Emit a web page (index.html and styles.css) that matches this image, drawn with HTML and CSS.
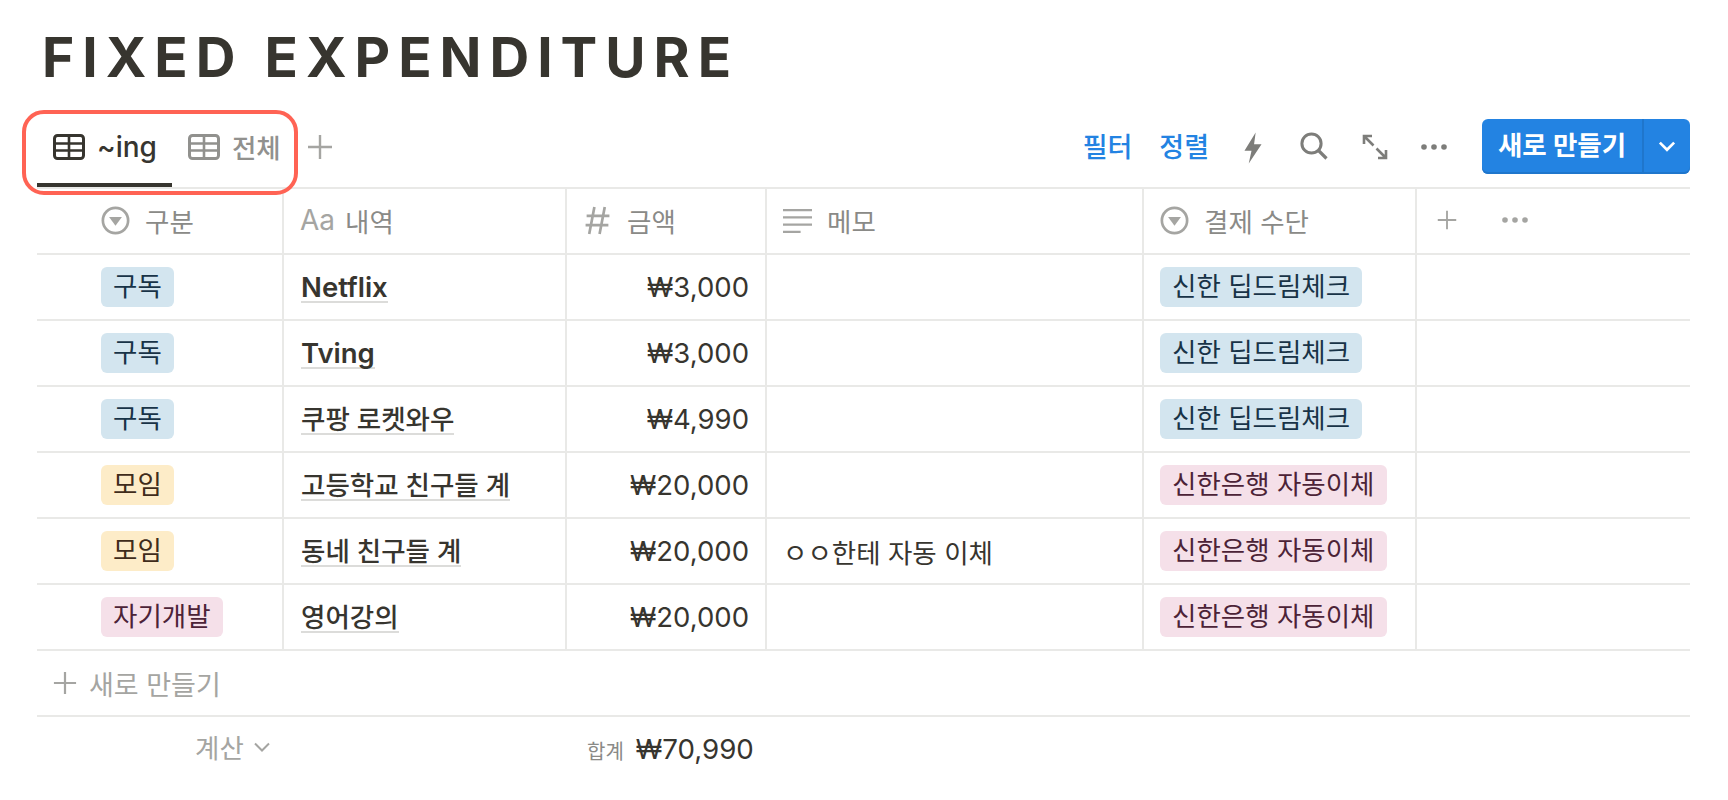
FILE: index.html
```html
<!DOCTYPE html>
<html lang="ko">
<head>
    <meta charset="UTF-8">
    <title>Fixed Expenditure</title>
    <link rel="stylesheet" href="styles.css">
</head>
<body>
    <svg class="icon-defs" width="0" height="0">
        <symbol id="i-table" viewBox="0 0 32 26">
            <rect x="1.5" y="1.5" width="29" height="23" rx="3" fill="none" stroke="currentColor" stroke-width="3"/>
            <path d="M1.5 9.5h29M1.5 16.5h29M16 1.5v23" fill="none" stroke="currentColor" stroke-width="2.6"/>
        </symbol>
        <symbol id="i-select" viewBox="0 0 28 28">
            <circle cx="14" cy="14" r="12.2" fill="none" stroke="currentColor" stroke-width="2.6"/>
            <path d="M7.8 10.5h12.4L14 19z" fill="currentColor"/>
        </symbol>
        <symbol id="i-plus" viewBox="0 0 26 26">
            <path d="M13 1v24M1 13h24" fill="none" stroke="currentColor" stroke-width="2.4"/>
        </symbol>
        <symbol id="i-dots" viewBox="0 0 26 6">
            <circle cx="3" cy="3" r="2.8" fill="currentColor"/>
            <circle cx="13" cy="3" r="2.8" fill="currentColor"/>
            <circle cx="23" cy="3" r="2.8" fill="currentColor"/>
        </symbol>
    </svg>

    <div class="page">
        <h1 class="title">FIXED EXPENDITURE</h1>

        <div class="toolbar">
            <div class="tabs">
                <div class="tab tab-active">
                    <svg class="tab-icon"><use href="#i-table"/></svg>
                    <span class="tab-latin">~ing</span>
                </div>
                <div class="tab">
                    <svg class="tab-icon"><use href="#i-table"/></svg>
                    <span>전체</span>
                </div>
                <svg class="tab-add"><use href="#i-plus"/></svg>
                <div class="highlight"></div>
            </div>

            <div class="actions">
                <span class="action-link">필터</span>
                <span class="action-link">정렬</span>
                <svg class="action-icon bolt" viewBox="0 0 18 30"><path d="M11.5 0.5L1 17.5h6.6L5 29.5 17 11.5h-7z" fill="currentColor"/></svg>
                <svg class="action-icon search" viewBox="0 0 28 28"><circle cx="11.5" cy="11.5" r="9.6" fill="none" stroke="currentColor" stroke-width="3"/><path d="M18.5 18.5L26.5 26.5" fill="none" stroke="currentColor" stroke-width="3.2"/></svg>
                <svg class="action-icon expand" viewBox="0 0 26 26"><path d="M2 2l9.5 9.5M14.5 14.5L24 24M2 10V2h8M24 16v8h-8" fill="none" stroke="currentColor" stroke-width="2.6"/></svg>
                <svg class="action-icon dots"><use href="#i-dots"/></svg>
                <div class="new-button">
                    <span class="new-label">새로 만들기</span>
                    <span class="new-arrow">
                        <svg viewBox="0 0 16 10" width="18" height="11"><path d="M1.5 1.5L8 8l6.5-6.5" fill="none" stroke="currentColor" stroke-width="2.4"/></svg>
                    </span>
                </div>
            </div>
        </div>

        <table class="sheet">
            <colgroup>
                <col class="col-type">
                <col class="col-name">
                <col class="col-amount">
                <col class="col-memo">
                <col class="col-pay">
                <col class="col-extra">
            </colgroup>
            <thead>
                <tr>
                    <th class="first-cell"><div class="head"><svg class="head-icon"><use href="#i-select"/></svg>구분</div></th>
                    <th><div class="head"><span class="aa">Aa</span>내역</div></th>
                    <th>
                        <div class="head">
                            <svg class="head-icon hash" viewBox="0 0 24 28"><path d="M9 1L4 27M19 1l-5 26M1.5 9.5h22M0.5 18.5h22" fill="none" stroke="currentColor" stroke-width="2.6"/></svg>
                            금액
                        </div>
                    </th>
                    <th>
                        <div class="head">
                            <svg class="head-icon lines" viewBox="0 0 28 24"><path d="M0 2h28M0 9h28M0 16h28M0 23h17" fill="none" stroke="currentColor" stroke-width="2.2"/></svg>
                            메모
                        </div>
                    </th>
                    <th><div class="head"><svg class="head-icon"><use href="#i-select"/></svg>결제 수단</div></th>
                    <th class="last-cell">
                        <div class="head">
                            <svg class="head-plus"><use href="#i-plus"/></svg>
                            <svg class="head-dots"><use href="#i-dots"/></svg>
                        </div>
                    </th>
                </tr>
            </thead>
            <tbody>
                <tr>
                    <td class="first-cell"><span class="pill blue">구독</span></td>
                    <td><span class="name bold">Netflix</span></td>
                    <td class="amount">₩3,000</td>
                    <td></td>
                    <td><span class="pill blue">신한 딥드림체크</span></td>
                    <td class="last-cell"></td>
                </tr>
                <tr>
                    <td class="first-cell"><span class="pill blue">구독</span></td>
                    <td><span class="name bold">Tving</span></td>
                    <td class="amount">₩3,000</td>
                    <td></td>
                    <td><span class="pill blue">신한 딥드림체크</span></td>
                    <td class="last-cell"></td>
                </tr>
                <tr>
                    <td class="first-cell"><span class="pill blue">구독</span></td>
                    <td><span class="name">쿠팡 로켓와우</span></td>
                    <td class="amount">₩4,990</td>
                    <td></td>
                    <td><span class="pill blue">신한 딥드림체크</span></td>
                    <td class="last-cell"></td>
                </tr>
                <tr>
                    <td class="first-cell"><span class="pill yellow">모임</span></td>
                    <td><span class="name">고등학교 친구들 계</span></td>
                    <td class="amount">₩20,000</td>
                    <td></td>
                    <td><span class="pill pink">신한은행 자동이체</span></td>
                    <td class="last-cell"></td>
                </tr>
                <tr>
                    <td class="first-cell"><span class="pill yellow">모임</span></td>
                    <td><span class="name">동네 친구들 계</span></td>
                    <td class="amount">₩20,000</td>
                    <td class="memo">ㅇㅇ한테 자동 이체</td>
                    <td><span class="pill pink">신한은행 자동이체</span></td>
                    <td class="last-cell"></td>
                </tr>
                <tr>
                    <td class="first-cell"><span class="pill pink">자기개발</span></td>
                    <td><span class="name">영어강의</span></td>
                    <td class="amount">₩20,000</td>
                    <td></td>
                    <td><span class="pill pink">신한은행 자동이체</span></td>
                    <td class="last-cell"></td>
                </tr>
            </tbody>
        </table>

        <div class="add-row">
            <svg class="add-icon"><use href="#i-plus"/></svg>
            <span>새로 만들기</span>
        </div>

        <div class="summary">
            <div class="calc">
                <span>계산</span>
                <svg viewBox="0 0 16 10" width="16" height="10"><path d="M1 1.5L8 8.5l7-7" fill="none" stroke="currentColor" stroke-width="2"/></svg>
            </div>
            <div class="total"><span class="total-label">합계</span>₩70,990</div>
        </div>
    </div>
</body>
</html>
```

FILE: styles.css
```css
body {
    margin: 0;
    background: #fff;
    color: #37352f;
    font-family: Inter, "Noto Sans CJK KR", sans-serif;
    font-size: 26.5px;
}
.icon-defs {
    position: absolute;
}
.page {
    padding: 0 38px 0 37px;
}
.title {
    margin: 0;
    padding: 27px 0 0 5px;
    height: 110px;
    box-sizing: border-box;
    font-size: 55px;
    line-height: 60px;
    font-weight: 700;
    letter-spacing: 8px;
}

/* toolbar */
.toolbar {
    display: flex;
    justify-content: space-between;
    height: 77px;
}
.tabs {
    position: relative;
    display: flex;
    align-items: flex-start;
}
.tab {
    display: flex;
    align-items: center;
    gap: 12px;
    height: 73px;
    padding: 0 15px 0 16px;
    color: #91918e;
    font-weight: 500;
}
.tab-active {
    color: #37352f;
    border-bottom: 4px solid #37352f;
}
.tab-icon {
    width: 32px;
    height: 26px;
}
.tab-latin {
    font-size: 28px;
}
.tab-add {
    width: 26px;
    height: 26px;
    margin: 24px 0 0 11px;
    color: #a5a5a2;
}
.highlight {
    position: absolute;
    left: -15px;
    top: 0;
    width: 276px;
    height: 85px;
    box-sizing: border-box;
    border: 4px solid #ff6354;
    border-radius: 22px;
}
.actions {
    display: flex;
    align-items: flex-start;
}
.action-link {
    margin-top: 16px;
    margin-right: 27px;
    color: #2383e2;
    font-weight: 500;
    font-size: 27px;
}
.action-icon {
    color: #7d7d7a;
}
.bolt {
    width: 20px;
    height: 32px;
    margin: 22px 37px 0 7px;
}
.search {
    width: 28px;
    height: 28px;
    margin: 22px 34px 0 0;
}
.expand {
    width: 26px;
    height: 26px;
    margin: 24px 33px 0 0;
}
.dots {
    width: 26px;
    height: 6px;
    margin: 34px 35px 0 0;
}
.new-button {
    display: flex;
    width: 208px;
    height: 55px;
    margin-top: 9px;
    border-radius: 6px;
    background: #2383e2;
    color: #fff;
    font-weight: 700;
    box-shadow: inset 0 -2px 0 #1f76cc;
}
.new-label {
    flex: 1;
    line-height: 53px;
    text-align: center;
}
.new-arrow {
    display: flex;
    align-items: center;
    justify-content: center;
    width: 46px;
    border-left: 2px solid #1f76cc;
}

/* table */
.sheet {
    width: 1653px;
    table-layout: fixed;
    border-collapse: collapse;
}
.col-type { width: 246px; }
.col-name { width: 283px; }
.col-amount { width: 200px; }
.col-memo { width: 377px; }
.col-pay { width: 273px; }
.col-extra { width: 274px; }
.sheet th,
.sheet td {
    height: 64px;
    padding: 0 16px;
    border: 2px solid #e9e9e7;
    font-weight: 400;
    text-align: left;
    white-space: nowrap;
}
.sheet .first-cell {
    padding-left: 64px;
    border-left: none;
}
.sheet .last-cell {
    border-right: none;
}
.head {
    display: flex;
    align-items: center;
    gap: 15px;
    padding-bottom: 2px;
    color: #8a8a87;
    font-size: 26.5px;
}
.head-icon {
    width: 29px;
    height: 29px;
    flex: none;
    color: #a5a5a2;
}
.aa {
    color: #a5a5a2;
    font-size: 28px;
    margin-right: -5px;
}
.head-plus {
    width: 20px;
    height: 20px;
    margin-left: 4px;
    color: #a5a5a2;
}
.head-dots {
    width: 26px;
    height: 6px;
    margin-left: 30px;
    color: #a5a5a2;
}
.pill {
    display: inline-block;
    height: 40px;
    padding: 0 12px;
    border-radius: 6px;
    line-height: 38px;
    vertical-align: middle;
}
.blue { background: #d3e5ef; color: #183347; }
.yellow { background: #fdecc8; color: #402c1b; }
.pink { background: #f5e0e9; color: #4c2337; }
.name {
    display: inline-block;
    margin-left: 1px;
    border-bottom: 2px solid #dcdcda;
    line-height: 28px;
    font-weight: 500;
}
.bold {
    font-size: 27.5px;
    font-weight: 600;
}
.sheet .amount {
    font-size: 27.5px;
    text-align: right;
}
.add-row {
    display: flex;
    align-items: center;
    gap: 12px;
    height: 64px;
    padding-left: 16px;
    border-bottom: 2px solid #e9e9e7;
    color: #a5a5a2;
    font-size: 27px;
}
.add-icon {
    width: 24px;
    height: 24px;
}
.summary {
    display: flex;
    align-items: center;
    height: 64px;
}
.calc {
    display: flex;
    align-items: center;
    gap: 10px;
    width: 550px;
    padding: 0 0 5px 158px;
    box-sizing: border-box;
    color: #a5a5a2;
}
.total {
    font-size: 27.7px;
}
.total-label {
    margin-right: 12px;
    color: #8a8a87;
    font-size: 20px;
}
```
